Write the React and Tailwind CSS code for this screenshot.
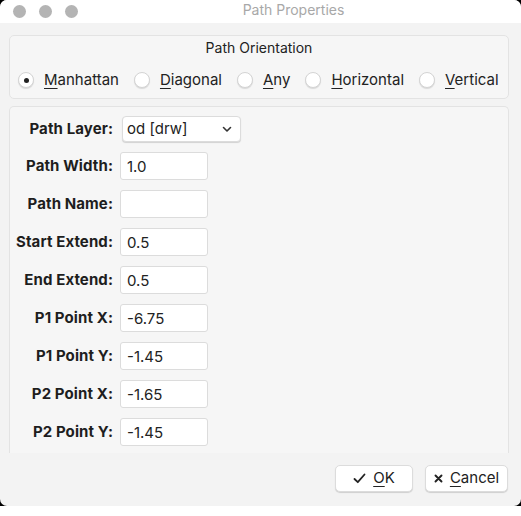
import React, { useState } from 'react';

const font = { fontFamily: 'Inter, "Noto Sans", sans-serif' };

const orientations = [
  { key: 'manhattan', u: 'M', rest: 'anhattan' },
  { key: 'diagonal', u: 'D', rest: 'iagonal' },
  { key: 'any', u: 'A', rest: 'ny' },
  { key: 'horizontal', u: 'H', rest: 'orizontal' },
  { key: 'vertical', u: 'V', rest: 'ertical' },
];

const fields = [
  { label: 'Path Width:', value: '1.0' },
  { label: 'Path Name:', value: '' },
  { label: 'Start Extend:', value: '0.5' },
  { label: 'End Extend:', value: '0.5' },
  { label: 'P1 Point X:', value: '-6.75' },
  { label: 'P1 Point Y:', value: '-1.45' },
  { label: 'P2 Point X:', value: '-1.65' },
  { label: 'P2 Point Y:', value: '-1.45' },
];

const Radio = ({ checked }) => (
  <span className="w-[16px] h-[16px] rounded-full bg-white border border-[#d4d4d4] shadow-[0_1px_1px_rgba(0,0,0,0.12)] flex items-center justify-center shrink-0">
    {checked && <span className="w-[5px] h-[5px] rounded-full bg-[#222]" />}
  </span>
);

export default function App() {
  const [orient, setOrient] = useState('manhattan');

  return (
    <div className="w-[521px] h-[516px] bg-white overflow-hidden" style={font}>
      <div className="w-[521px] h-[506px] bg-black">
        <div className="w-full h-full bg-[#f3f3f3] rounded-[7px] flex flex-col overflow-hidden">
          {/* title bar */}
          <div className="h-[23px] bg-white flex items-center px-[13px] relative shrink-0">
            <div className="flex gap-[13px]">
              <span className="w-[13px] h-[13px] rounded-full bg-[#b4b4b4]" />
              <span className="w-[13px] h-[13px] rounded-full bg-[#b4b4b4]" />
              <span className="w-[13px] h-[13px] rounded-full bg-[#b4b4b4]" />
            </div>
            <div className="absolute inset-0 flex items-center justify-center pl-[66px] pb-[4px] text-[14px] text-[#a8a8a8]">
              Path Properties
            </div>
          </div>

          <div className="flex flex-col px-[9px] pt-[12px]">
            {/* orientation group */}
            <div className="w-[500px] h-[64px] border border-[#e3e3e3] rounded-[5px] bg-[#f6f6f6] flex flex-col items-center">
              <div className="text-[14px] text-[#222] mt-[3px] leading-[18px]">Path Orientation</div>
              <div className="flex items-center gap-[15px] mt-[14px] w-full pl-[8px]">
                {orientations.map((o) => (
                  <label key={o.key} className="flex items-center gap-[10px] text-[15px] text-[#222] leading-[18px] cursor-default" onClick={() => setOrient(o.key)}>
                    <Radio checked={orient === o.key} />
                    <span>
                      <span className="underline underline-offset-[3px] decoration-[1px]">{o.u}</span>
                      {o.rest}
                    </span>
                  </label>
                ))}
              </div>
            </div>

            {/* properties group */}
            <div className="w-[500px] h-[347px] mt-[7px] border border-[#e3e3e3] border-b-0 rounded-t-[5px] bg-[#f6f6f6] pt-[9px]">
              <div className="grid grid-cols-[103px_auto] gap-x-[7px] gap-y-[10px] items-center">
                <div className="text-right text-[15px] font-bold text-[#1e1e1e] tracking-[0.1px]">Path Layer:</div>
                <div className="h-[26px] w-[119px] ml-[2px] bg-white rounded-[4px] border border-[#dcdcdc] shadow-[0_1px_1px_rgba(0,0,0,0.15)] flex items-center justify-between pl-[4px] pr-[8px] text-[15px] text-[#222]">
                  <span>od [drw]</span>
                  <svg width="10" height="7" viewBox="0 0 10 7" fill="none">
                    <path d="M1.5 1.5 L5 5 L8.5 1.5" stroke="#333" strokeWidth="1.6" strokeLinecap="round" strokeLinejoin="round" />
                  </svg>
                </div>
                {fields.map((f) => (
                  <React.Fragment key={f.label}>
                    <div className="text-right text-[15px] font-bold text-[#1e1e1e] tracking-[0.1px]">{f.label}</div>
                    <input
                      defaultValue={f.value}
                      className="h-[28px] w-[88px] bg-white border border-[#dcdcdc] rounded-[3px] px-[6px] text-[15px] text-[#222] outline-none"
                      style={font}
                    />
                  </React.Fragment>
                ))}
              </div>
            </div>
          </div>

          {/* buttons */}
          <div className="flex justify-end gap-[12px] pr-[13px] mt-[12px]">
            <button className="w-[78px] h-[27px] bg-white rounded-[5px] border border-[#dcdcdc] shadow-[0_1px_1px_rgba(0,0,0,0.15)] flex items-center justify-center gap-[7px] text-[15px] text-[#222]">
              <svg width="13" height="11" viewBox="0 0 13 11" fill="none">
                <path d="M1.5 6 L4.8 9.2 L11.5 1.5" stroke="#222" strokeWidth="1.8" strokeLinecap="round" strokeLinejoin="round" />
              </svg>
              <span><span className="underline underline-offset-[3px]">O</span>K</span>
            </button>
            <button className="w-[83px] h-[27px] bg-white rounded-[5px] border border-[#dcdcdc] shadow-[0_1px_1px_rgba(0,0,0,0.15)] flex items-center justify-center gap-[7px] text-[15px] text-[#222]">
              <svg width="9" height="9" viewBox="0 0 9 9" fill="none">
                <path d="M1.5 1.5 L7.5 7.5 M7.5 1.5 L1.5 7.5" stroke="#222" strokeWidth="1.9" strokeLinecap="round" />
              </svg>
              <span><span className="underline underline-offset-[3px]">C</span>ancel</span>
            </button>
          </div>
        </div>
      </div>
    </div>
  );
}
